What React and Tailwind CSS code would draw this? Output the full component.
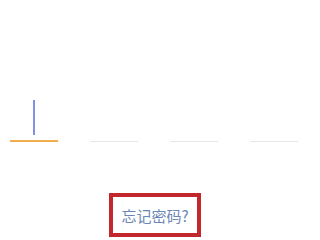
import React from "react";

const CodeBox = ({ active }) => (
  <div className="w-[48px] flex flex-col items-center">
    <div className={`${active ? "h-[40px]" : "h-[41px]"} flex justify-center`}>
      {active && <div className="w-[2px] h-[35px] bg-[#7f92e8]"></div>}
    </div>
    <div className={`w-full ${active ? "h-[2px] bg-[#f2ae4e]" : "h-[1px] bg-[#e6e6e6]"}`}></div>
  </div>
);

export default function App() {
  return (
    <div className="w-[320px] h-[240px] bg-white overflow-hidden" style={{ fontFamily: '"Noto Sans CJK SC", "Noto Sans", sans-serif' }}>
      <div className="pt-[100px] pl-[10px] w-[298px] flex justify-between items-start">
        <CodeBox active />
        <CodeBox />
        <CodeBox />
        <CodeBox />
      </div>
      <div className="mt-[51px] ml-[109px] w-[92px] h-[44px] border-4 border-[#c1272d] flex items-center justify-center">
        <span className="text-[15px] text-[#6a87b5] leading-none">忘记密码?</span>
      </div>
    </div>
  );
}
